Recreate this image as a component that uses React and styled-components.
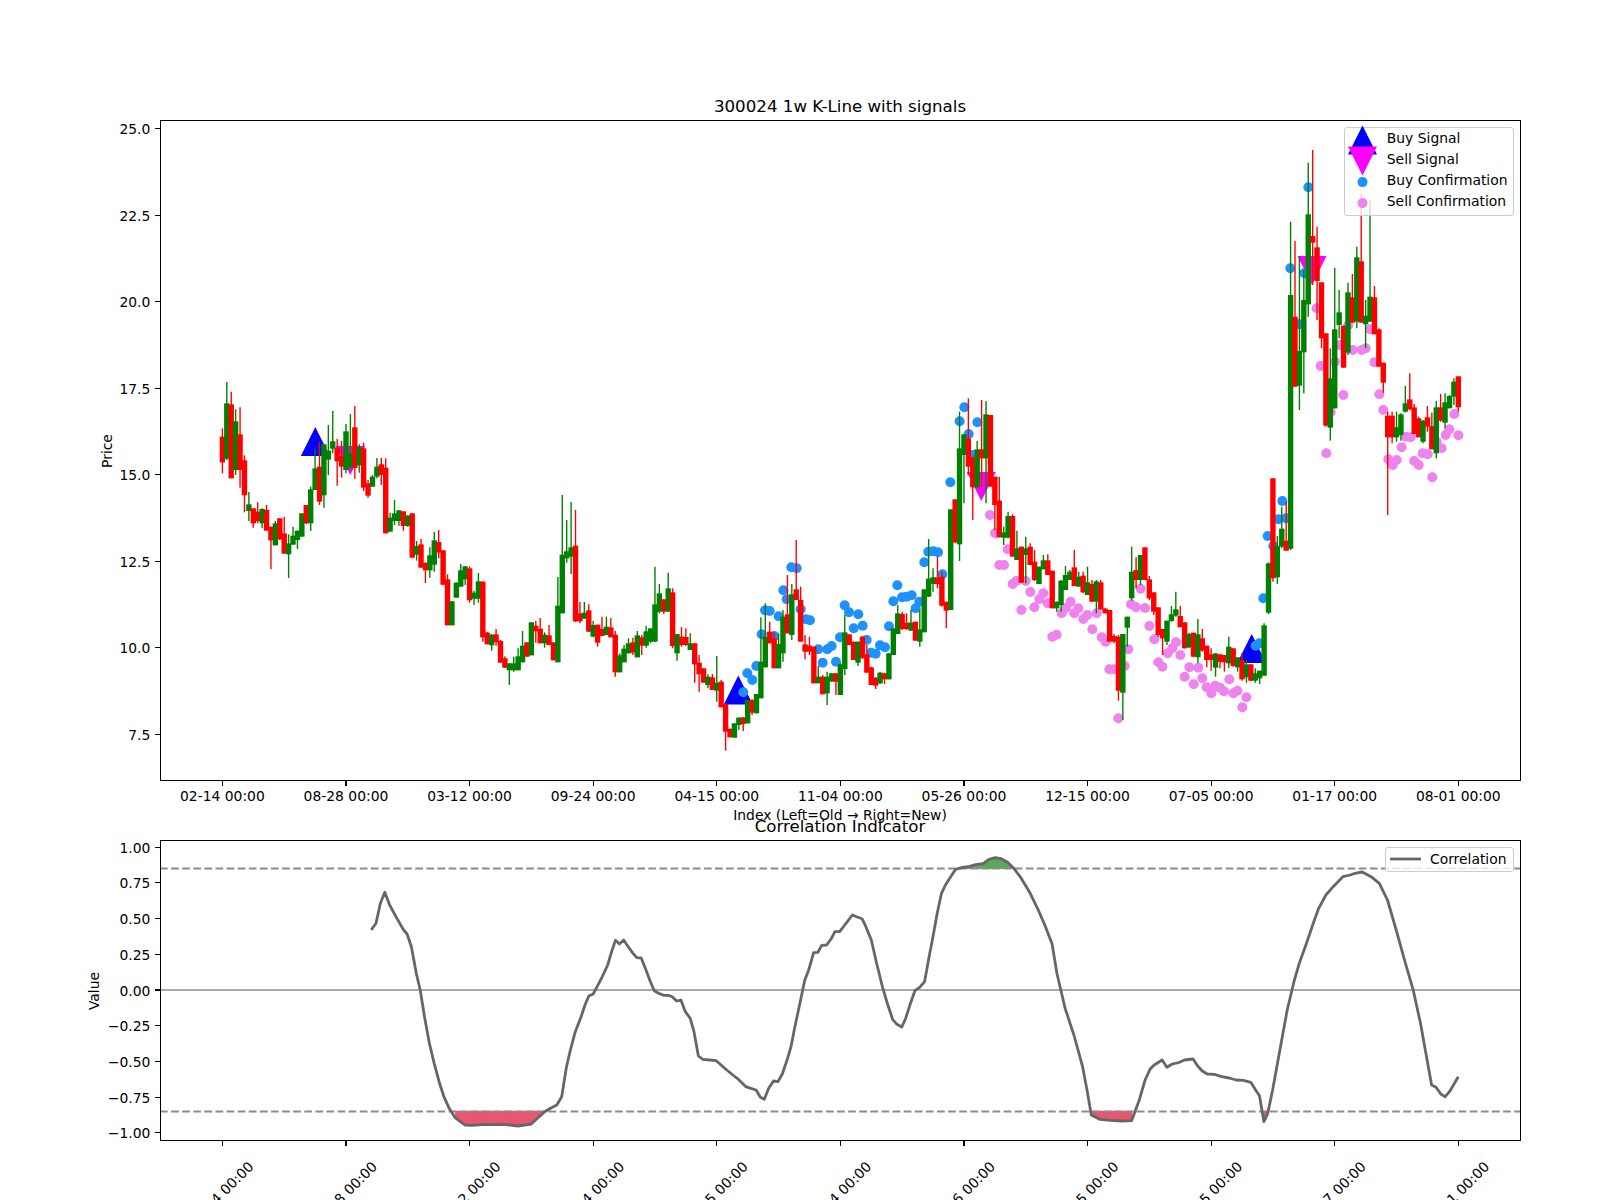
import React from 'react'
import styled, { createGlobalStyle } from 'styled-components'

// 281 weekly bars, one tick every 28
const barX = (i) => 222.4 + 4.414 * i
const tickLabels = ['02-14', '08-28', '03-12', '09-24', '04-15', '11-04', '05-26', '12-15', '07-05', '01-17', '08-01']

// rows: colour, wick top, body top, body bottom, wick bottom (third-of-pixel units below `base`)
const barBlocks = [
	{ base: 340, rows: 'r 265 290 367 400,g 126 190 356 360,r 155 193 415 415,g 208 244 390 405,r 202 283 390 443,r 346 361 466 517,g 456 493 513 543,r 505 505 550 563,r 487 515 543 550,g 505 507 550 565,r 495 510 572 572,r 560 560 601 687,g 543 550 616 616,r 535 535 598 600,r 531 580 641 641,g 583 610 643 714,g 560 587 614 614,g 572 572 600 627,g 520 520 590 590,r 495 495 550 552,g 440 448 550 573,g 327 385 450 450,r 305 380 485 495,g 313 313 466 503,g 255 332 359 405,g 213 304 326 340,r 297 323 364 437,r 303 348 380 413,g 252 274 390 400,g 222 340 380 390,r 198 262 384 416,g 313 322 376 398,r 308 325 443 453,r 420 430 467 473,g 405 410 440 440,g 354 380 410 415,r 353 373 405 435,r 355 383 580 580,g 518 533 575 575,g 480 520 543 555,g 510 511 543 557,r 514 514 558 572,g 525 527 558 560,r 520 520 653 653,g 603 618 644 662,r 597 613 683 683,r 668 668 691 729,g 622 646 691 713,g 576 601 674 695,r 570 606 638 655,r 630 631 734 736,r 703 718 856 856,g 784 784 856 856,g 727 728 773 773,g 672 691 740 740,g 678 679 718 735,r 679 685 781 788,g 752 758 776 795,g 699 724 776 788,r 724 725 892 905,r 876 878 913 913,g 882 884 916 932,r 867 883 907 917,r 900 903 968 968,r 949 955 983 983,g 970 970 991 1035,g 950 970 991 995,g 925 949 991 991,g 873 917 967 967,r 907 907 950 950,g 847 847 946 946,r 843 857 874 908,r 834 866 910 910,g 877 884 910 923,r 855 886 915 915,r 907 907 961 961,g 711 797 967 967,g 465 644 820 820,g 540 634 655 668,g 486 622 650 702,r 510 617 844 846,r 786 820 844 850,g 786 818 836 837,r 793 811 875 876,g 843 855 890 892,r 854 854 908 920,r 830 867 888 888,g 830 860 885 885,r 834 862 892 892,r 873 884 997 1010,g 940 946 997 997,g 915 926 967 967,g 895 910 940 940,r 893 907 938 945,g 873 886 952 952,r 885 892 917 945,g 857 874 917 923' },
	{ base: 380, rows: 'g 745 745 785 790,g 560 673 785 785,g 612 640 695 700,r 658 658 695 702,g 578 625 695 695,r 625 637 798 805,g 762 762 820 842,r 741 770 795 800,r 745 771 795 798,g 760 790 810 810,r 790 790 853 908,r 825 848 883 935,r 865 865 908 908,g 883 890 915 925,r 882 892 930 930,g 828 908 932 965,r 900 905 982 982,r 970 972 1055 1112,r 1045 1047 1072 1072,g 1030 1030 1073 1073,g 1012 1013 1035 1050,r 1012 1012 1032 1053,g 960 960 1030 1030,r 958 960 998 1005,g 942 942 1000 1000,g 712 845 955 955,g 670 770 862 862,r 725 755 790 790,r 755 775 865 865,g 760 792 865 865,g 690 710 820 845,r 585 703 760 760,g 612 643 765 780,r 480 628 660 660,r 620 660 785 785,r 765 793 815 838,r 770 797 815 825,r 800 800 910 910,g 858 890 910 910,r 885 890 943 943,g 875 890 940 975,g 880 880 905 905,r 880 880 905 945,g 850 853 945 945,g 705 757 867 885,r 763 763 795 795,r 785 785 840 840,g 785 785 848 858,r 768 770 835 835,r 795 823 878 878,r 860 862 915 915,r 892 893 917 927,g 875 878 910 912,r 878 880 898 912,g 820 820 898 898,g 745 745 825 825,g 675 700 762 762,r 695 702 747 750,r 700 728 747 750,g 690 728 752 752,r 725 725 782 782,g 690 748 785 800,g 628 628 757 757,g 477 596 650 650,g 565 592 612 635,r 530 592 612 625,r 575 590 677 680,r 665 665 692 745,g 388 388 690 690,r 358 358 487 490,g 95 205 493 543,g 163 163 225 370,r 55 175 260 285,r 230 232 322 420,g 183 208 322 322,r 60 208 235 320,g 63 103 235 370,r 105 105 320 320,r 290 290 375 450,r 290 362 472 472,g 440 457 473 495,g 395 408 473 475,r 403 408 530 530,g 452 505 540 540,r 500 500 608 608,g 470 505 525 610,r 490 500 555 555,r 510 545 600 603,g 560 560 612 612,g 525 541 568 568,r 523 541 585 585,r 572 572 685 685,g 665 665 685 695,g 600 602 675 695,g 558 585 630 630,g 570 575 600 600,r 510 562 618 618,g 575 590 620 620,r 575 587 637 640,g 560 607 645 645,r 600 612 665 665,g 600 604 665 700,r 600 607 688 690,r 683 686 700 700,r 690 690 785 785,r 762 768 785 790,r 765 770 932 962,g 762 762 938 1020,g 710 710 743 800' },
	{ base: 480, rows: 'g 200 275 355 362,r 232 270 300 325,g 225 225 300 315,r 202 202 300 300,r 288 298 355 360,r 337 337 395 405,r 382 382 465 470,r 447 447 475 525,g 422 422 485 495,g 378 403 423 425,g 335 388 407 410,r 378 408 442 442,r 427 427 505 505,g 458 462 502 505,r 458 458 530 532,g 417 463 532 550,r 447 475 512 515,r 497 497 540 562,r 505 523 540 572,g 520 520 563 590,r 523 523 546 565,r 525 525 547 575,g 470 500 550 565,r 505 505 558 560,g 532 532 562 575,r 520 540 598 602,g 540 553 592 608,r 553 553 602 603,g 565 580 602 608,g 572 572 595 612,g 430 436 587 587,g 247 250 398 402' },
	{ base: 100, rows: 'r 1135 1135 1435 1445,g 1308 1338 1432 1452,g 1220 1286 1340 1345,r 1205 1322 1352 1352,g 365 585 1346 1350,r 423 650 860 860,g 470 753 857 930,g 510 600 757 880,g 188 343 613 650,r 150 408 428 555,r 380 442 543 660,r 547 547 715 745,r 700 700 977 980,g 745 835 983 1022,g 503 688 925 925,g 570 637 675 715,r 677 677 803 803,g 548 577 758 765,r 522 592 668 668,g 440 472 665 685,r 280 484 668 668,g 600 647 673 745,g 300 590 665 665,r 558 592 703 703,r 685 688 800 800,r 788 788 848 878,r 935 947 1012 1245,r 935 947 1012 1030,g 935 982 1012 1025,g 940 943 1005 1022,g 858 910 935 938,r 820 898 928 930,r 912 922 1002 1002,r 950 955 1012 1012,g 960 962 1025 1030,r 918 952 980 995,r 938 978 1048 1048,g 903 922 1060 1075,r 882 922 962 965,g 880 907 968 985,g 885 888 925 925,g 835 845 890 915,r 829 829 922 935' },
]

const bars = barBlocks.flatMap(({ base, rows }) =>
	rows.split(',').map((row) => {
		const [colour, ...vals] = row.split(' ')
		const [high, top, bottom, low] = vals.map((v) => base + Number(v) / 3)
		return { colour, high, top, bottom, low }
	})
)

const place = (ox, oy, flat) => {
	const out = []
	for (let i = 0; i < flat.length; i += 2) out.push([ox + flat[i] / 3, oy + flat[i + 1] / 3])
	return out
}

const buyDots = [
	...place(650, 380, [280,937,292,880,307,900,319,858,335,763,345,691,359,693,373,768,386,709,400,631,410,658,424,562,440,565,452,688,468,718,480,721,505,808,518,848,532,808,545,798,558,845,570,772,584,676,597,697,611,745,625,703,638,737,650,780,663,818,677,821,690,796,705,802,717,739,730,664,742,616,756,652,770,650,785,646,797,685,808,665,823,547,835,515,850,514,864,517,877,583,901,307,929,124,943,82,956,162,969,225,982,127]),
	...place(1000, 480, [767,497,778,490,790,355,803,168,820,198,835,118,847,63,858,115]),
	...place(1100, 100, [571,505,598,673,613,520,625,262]),
]

const sellDots = [
	...place(650, 380, [1020,405,1035,460,1073,508,1048,555,1062,555,1088,612,1100,602,1127,603,1141,636,1114,690,1153,682,1168,657,1180,640,1193,670,1207,770,1220,764,1235,700,1248,683,1262,665,1273,700,1285,685,1300,717,1312,705,1327,748,1340,700,1355,772,1367,785,1378,868,1392,868,1405,1015,1424,858,1435,808,1443,673,1458,682,1472,626,1485,684,1498,738]),
	...place(1000, 480, [463,478,475,547,487,560,503,520,517,505,528,487,541,525,554,590,568,562,581,613,595,563,607,595,620,622,634,640,646,617,660,623,672,634,688,598,700,640,712,632,727,682,739,652]),
	...place(1100, 100, [650,625,662,798,679,1060,692,935,705,785,718,735,730,885,745,675,758,750,785,750,797,745,810,688,823,787,838,883,850,930,865,1078,878,1095,890,1080,905,1042,918,1010,932,1012,943,1083,956,1095,968,1060,983,1063,997,1132,1010,1025,1025,1045,1037,1005,1048,988,1063,942,1075,1006]),
]

const buySignals = [[315.3, 441.4], [738.3, 690], [1251.7, 648.4]]
const sellSignals = [[350.3, 460.5], [981.3, 486.5], [1312, 270.5]]

// correlation line, read at 2.063x / 3x
const curve = (ox, flat) => {
	const out = []
	for (let i = 0; i < flat.length; i += 2) out.push([ox + flat[i] / 2.063, 790 + flat[i + 1] / 3])
	return out
}
const corrLine = [
	...curve(60, [642,420,652,400,661,340,670,307,680,345,695,385,708,418,716,432,725,470,735,550,743,600,752,680,762,760,772,820,782,875,792,920,803,955,815,983,826,995,835,1005,850,1006,870,1004,900,1004,920,1004,945,1008,972,1002,985,985,1000,965,1012,955,1025,945,1035,920,1045,830,1053,780,1063,725,1075,680,1083,645,1091,618,1100,612,1108,590,1118,562,1130,525,1138,485,1146,451,1154,462,1163,450,1172,470,1182,490,1190,503,1199,504,1209,540,1218,575,1226,602,1235,610,1245,616,1255,616,1263,620,1272,633,1281,630,1290,665,1300,685,1308,725,1317,798,1326,808,1340,810,1354,812,1370,833,1388,855,1397,865,1415,890,1425,895,1436,900,1445,922,1453,928,1462,895,1472,873,1481,875,1490,853,1500,810,1508,770,1516,710,1525,650]),
	...curve(800, [10,570,18,540,28,488,37,487,45,466,55,465,65,445,72,425,82,425,108,375,118,381,128,386,136,410,147,450,158,520,170,590,180,640,191,688,200,703,210,711,218,685,228,640,237,602,247,592,257,575,265,510,275,435,283,370,292,310,300,285,312,258,321,238,335,232,350,229,362,224,378,221,390,208,403,203,415,206,428,217,441,235,455,262,475,310,490,355,505,405,520,462,530,550,538,600,547,655,565,735,583,830,592,900,601,975,618,988,640,991,665,993,684,992,700,930,712,870,722,838,730,826,747,810,757,832,768,822,783,817,793,810,811,807,820,827,830,843,840,852,855,853,870,860,885,864,900,870,915,871,930,877,940,900,948,917,957,995,965,970,975,900,990,780,1005,660,1020,570,1030,520,1045,460,1060,395,1070,355,1085,315,1100,290,1120,260,1135,255,1145,250,1160,246,1180,262,1195,280,1212,330,1230,420,1247,510,1265,600,1280,700,1290,780,1303,885,1312,892,1322,912,1331,920,1340,905,1358,860]),
]

const fills = [
	{ tone: '#e8566f', pts: curve(60, [815,962,815,983,826,995,835,1005,850,1006,870,1004,900,1004,920,1004,945,1008,972,1002,985,985,1003,962]) },
	{ tone: '#e8566f', pts: curve(800, [601,962,601,975,618,988,640,991,665,993,684,992,686,962]) },
	{ tone: '#e8566f', pts: curve(800, [951,962,957,995,965,962]) },
	{ tone: '#5aa85a', pts: curve(800, [320,237,335,232,350,229,362,224,378,221,390,208,403,203,415,206,428,217,441,235,442,237]) },
]

const toPoints = (pts) => pts.map(([x, y]) => `${x.toFixed(1)},${y.toFixed(1)}`).join(' ')
const priceTicks = [['25.0', 128.8], ['22.5', 215.3], ['20.0', 301.8], ['17.5', 388.3], ['15.0', 474.8], ['12.5', 561.3], ['10.0', 647.8], ['7.5', 734.3]]
const corrY = (v) => 990 - v * 142.8
const corrTicks = ['1.00', '0.75', '0.50', '0.25', '0.00', '\u22120.25', '\u22120.50', '\u22120.75', '\u22121.00']

const triangle = (x, y, dir) =>
	`${x - 14.5},${y + dir * 14.5} ${x + 14.5},${y + dir * 14.5} ${x},${y - dir * 14.5}`

const GlobalStyle = createGlobalStyle`
	html, body {
		margin: 0;
		background: #fff;
	}
`

const Figure = styled.div`
	width: 1600px;
	height: 1200px;
	padding-top: 96px;
	box-sizing: border-box;
	overflow: hidden;
	background: #fff;
	color: #000;
	font-family: "DejaVu Sans", sans-serif;
`

// the axes run 160..1520, so titles centre on 840 and not on the page
const Title = styled.h2`
	margin: 0;
	height: 24px;
	padding-left: 80px;
	font-size: 16.67px;
	font-weight: 400;
	line-height: 21px;
	text-align: center;
`

const Panel = styled.section`
	position: relative;
`

const Plot = styled.svg`
	display: block;
	overflow: visible;
`

const TickLabel = styled.text`
	font-family: "DejaVu Sans", sans-serif;
	font-size: 13.89px;
	fill: #000;
	text-anchor: ${(p) => p.$anchor || 'middle'};
	dominant-baseline: central;
`

const Tick = styled.line`
	stroke: #000;
	stroke-width: 1.1;
	shape-rendering: crispEdges;
`

const Frame = styled.rect`
	fill: none;
	stroke: #000;
	stroke-width: 1.1;
	shape-rendering: crispEdges;
`

const Wick = styled.line`
	stroke: ${(p) => (p.$colour === 'r' ? '#ff0000' : '#008000')};
	stroke-width: 1.39;
`

const Body = styled.rect`
	fill: ${(p) => (p.$colour === 'r' ? '#ff0000' : '#008000')};
`

const Threshold = styled.line`
	stroke: #8c8c8c;
	stroke-width: 2;
	stroke-dasharray: 7.7 3.4;
`

const ZeroLine = styled.line`
	stroke: #aaa;
	stroke-width: 2;
`

const CorrLine = styled.polyline`
	fill: none;
	stroke: #666;
	stroke-width: 2.8;
	stroke-linejoin: round;
`

const Legend = styled.div`
	position: absolute;
	top: 7px;
	right: 86.5px;
	box-sizing: border-box;
	padding: 0 ${(p) => p.$padRight}px ${(p) => p.$padBottom}px 4px;
	border: 1px solid #ccc;
	border-radius: 3px;
	background: rgba(255, 255, 255, 0.8);
	font-size: 13.89px;
`

const LegendRow = styled.div`
	display: flex;
	align-items: flex-start;
	gap: ${(p) => p.$gap}px;
	height: ${(p) => p.$height}px;
	line-height: ${(p) => p.$height - 1}px;
	white-space: nowrap;
`

const LegendKey = styled.svg`
	display: block;
	flex: none;
	overflow: visible;
	width: ${(p) => p.$width}px;
	height: ${(p) => p.$height}px;
`

const KeyLine = styled.line`
	stroke: #666;
	stroke-width: 2.8;
`

const priceKeys = [
	{ label: 'Buy Signal', mark: <polygon points={triangle(0, 0, 1)} fill="#0000ff" /> },
	{ label: 'Sell Signal', mark: <polygon points={triangle(0, 0, -1)} fill="#ff00ff" /> },
	{ label: 'Buy Confirmation', mark: <circle r="5" fill="#1e90ff" /> },
	{ label: 'Sell Confirmation', mark: <circle r="5" fill="#ee82ee" /> },
]

const PriceLegend = () => (
	<Legend $padRight={5} $padBottom={3}>
		{priceKeys.map((k) => (
			<LegendRow key={k.label} $gap={11} $height={21}>
				<LegendKey $width={27} $height={21} viewBox="-13.5 -12.1 27 21">{k.mark}</LegendKey>
				{k.label}
			</LegendRow>
		))}
	</Legend>
)

const CorrLegend = () => (
	<Legend $padRight={6} $padBottom={0}>
		<LegendRow $gap={8.5} $height={23}>
			<LegendKey $width={31} $height={23} viewBox="0 -11 31 23"><KeyLine x1="0" x2="31" y1="0" y2="0" /></LegendKey>
			Correlation
		</LegendRow>
	</Legend>
)

const Candles = () => (
	<g>
		{bars.map((b, i) => (
			<g key={i}>
				<Wick $colour={b.colour} x1={barX(i)} x2={barX(i)} y1={b.high} y2={b.low} />
				<Body $colour={b.colour} x={barX(i) - 2.7} width={5.4} y={b.top} height={b.bottom - b.top} />
			</g>
		))}
	</g>
)

export default function App() {
	return (
		<>
			<GlobalStyle />
			<Figure>
				<Title>300024 1w K-Line with signals</Title>
				<Panel>
					<Plot width="1600" height="696" viewBox="0 120 1600 696">
						{buySignals.map(([x, y], i) => <polygon key={i} points={triangle(x, y, 1)} fill="#0000ff" />)}
						{sellSignals.map(([x, y], i) => <polygon key={i} points={triangle(x, y, -1)} fill="#ff00ff" />)}
						{buyDots.map(([x, y], i) => <circle key={i} cx={x} cy={y} r="5" fill="#1e90ff" />)}
						{sellDots.map(([x, y], i) => <circle key={i} cx={x} cy={y} r="5" fill="#ee82ee" />)}
						<Candles />
						<Frame x="160.5" y="120.5" width="1360" height="660" />
						{priceTicks.map(([label, y]) => (
							<g key={label}>
								<Tick x1="155" x2="160" y1={y} y2={y} />
								<TickLabel $anchor="end" x="150.3" y={y + 0.5}>{label}</TickLabel>
							</g>
						))}
						{tickLabels.map((label, i) => (
							<g key={label}>
								<Tick x1={barX(i * 28)} x2={barX(i * 28)} y1="781" y2="786" />
								<TickLabel x={barX(i * 28)} y="796">{label} 00:00</TickLabel>
							</g>
						))}
						<TickLabel transform="rotate(-90 107 451)" x="107" y="451">Price</TickLabel>
						<TickLabel x="840" y="815">Index (Left=Old → Right=New)</TickLabel>
					</Plot>
					<PriceLegend />
				</Panel>
				<Title>Correlation Indicator</Title>
				<Panel>
					<Plot width="1600" height="360" viewBox="0 840 1600 360">
						<ZeroLine x1="160" x2="1520" y1="990" y2="990" />
						{fills.map((f, i) => <polygon key={i} points={toPoints(f.pts)} fill={f.tone} />)}
						<Threshold x1="160" x2="1520" y1={corrY(0.85)} y2={corrY(0.85)} />
						<Threshold x1="160" x2="1520" y1={corrY(-0.85)} y2={corrY(-0.85)} />
						<CorrLine points={toPoints(corrLine)} />
						<Frame x="160.5" y="840.5" width="1360" height="300" />
						{corrTicks.map((label, i) => (
							<g key={label}>
								<Tick x1="155" x2="160" y1={corrY(1 - i * 0.25)} y2={corrY(1 - i * 0.25)} />
								<TickLabel $anchor="end" x="150.3" y={corrY(1 - i * 0.25) + 0.5}>{label}</TickLabel>
							</g>
						))}
						{tickLabels.map((label, i) => (
							<g key={label}>
								<Tick x1={barX(i * 28)} x2={barX(i * 28)} y1="1141" y2="1146" />
								<TickLabel transform={`rotate(-45 ${barX(i * 28) - 1.5} 1194)`} x={barX(i * 28) - 1.5} y="1194">{label} 00:00</TickLabel>
							</g>
						))}
						<TickLabel transform="rotate(-90 94 991)" x="94" y="991">Value</TickLabel>
					</Plot>
					<CorrLegend />
				</Panel>
			</Figure>
		</>
	)
}
